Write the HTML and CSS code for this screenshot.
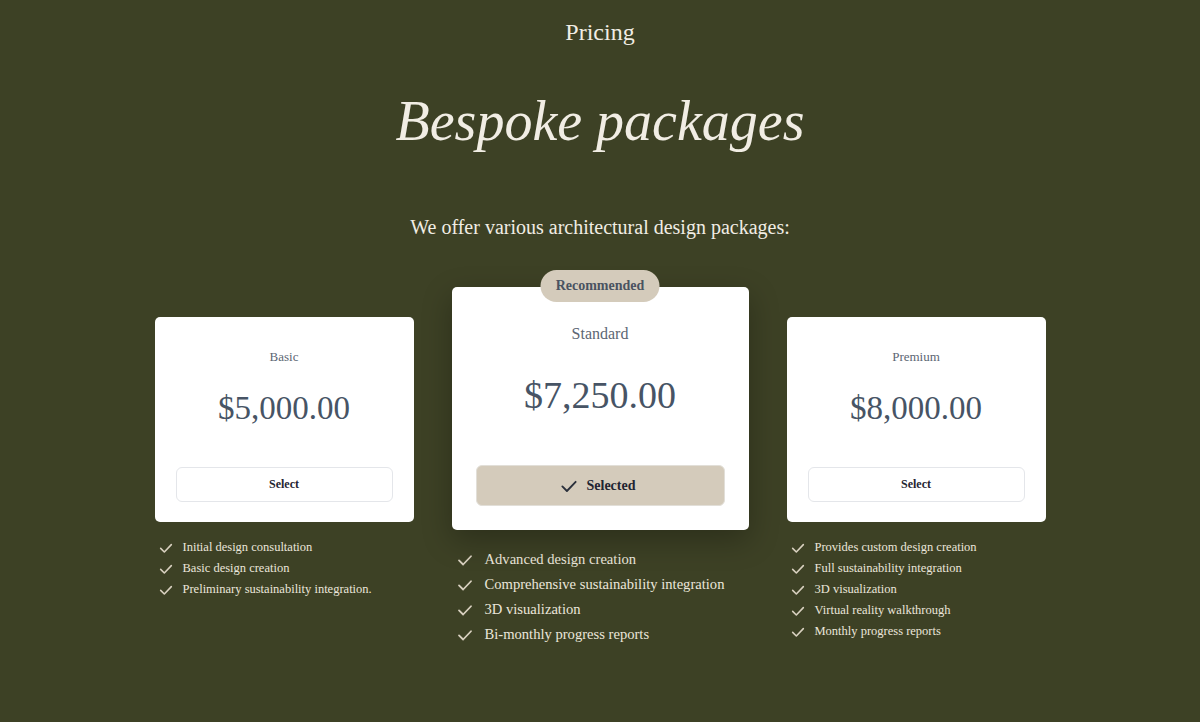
FILE: index.html
```html
<!DOCTYPE html>
<html lang="en">
<head>
  <meta charset="UTF-8">
  <meta name="viewport" content="width=device-width, initial-scale=1.0">
  <title>Pricing</title>
  <link rel="stylesheet" href="styles.css">
</head>
<body>
  <section class="pricing">
    <div class="eyebrow">Pricing</div>
    <h1>Bespoke packages</h1>
    <p class="lead">We offer various architectural design packages:</p>

    <div class="plans">
      <div class="plan">
        <div class="card">
          <div class="plan-name">Basic</div>
          <div class="plan-price">$5,000.00</div>
          <button class="select-btn">Select</button>
        </div>
        <ul class="features">
          <li><svg viewBox="0 0 24 24"><polyline points="4 12.5 9.5 18 20 7"/></svg>Initial design consultation</li>
          <li><svg viewBox="0 0 24 24"><polyline points="4 12.5 9.5 18 20 7"/></svg>Basic design creation</li>
          <li><svg viewBox="0 0 24 24"><polyline points="4 12.5 9.5 18 20 7"/></svg>Preliminary sustainability integration.</li>
        </ul>
      </div>

      <div class="plan plan-featured">
        <div class="card">
          <span class="badge">Recommended</span>
          <div class="plan-name">Standard</div>
          <div class="plan-price">$7,250.00</div>
          <button class="select-btn is-selected"><svg viewBox="0 0 24 24"><polyline points="4 12.5 9.5 18 20 7"/></svg>Selected</button>
        </div>
        <ul class="features">
          <li><svg viewBox="0 0 24 24"><polyline points="4 12.5 9.5 18 20 7"/></svg>Advanced design creation</li>
          <li><svg viewBox="0 0 24 24"><polyline points="4 12.5 9.5 18 20 7"/></svg>Comprehensive sustainability integration</li>
          <li><svg viewBox="0 0 24 24"><polyline points="4 12.5 9.5 18 20 7"/></svg>3D visualization</li>
          <li><svg viewBox="0 0 24 24"><polyline points="4 12.5 9.5 18 20 7"/></svg>Bi-monthly progress reports</li>
        </ul>
      </div>

      <div class="plan">
        <div class="card">
          <div class="plan-name">Premium</div>
          <div class="plan-price">$8,000.00</div>
          <button class="select-btn">Select</button>
        </div>
        <ul class="features">
          <li><svg viewBox="0 0 24 24"><polyline points="4 12.5 9.5 18 20 7"/></svg>Provides custom design creation</li>
          <li><svg viewBox="0 0 24 24"><polyline points="4 12.5 9.5 18 20 7"/></svg>Full sustainability integration</li>
          <li><svg viewBox="0 0 24 24"><polyline points="4 12.5 9.5 18 20 7"/></svg>3D visualization</li>
          <li><svg viewBox="0 0 24 24"><polyline points="4 12.5 9.5 18 20 7"/></svg>Virtual reality walkthrough</li>
          <li><svg viewBox="0 0 24 24"><polyline points="4 12.5 9.5 18 20 7"/></svg>Monthly progress reports</li>
        </ul>
      </div>
    </div>
  </section>
</body>
</html>
```

FILE: styles.css
```css
* {
  box-sizing: border-box;
}

body {
  margin: 0;
  background-color: #3d4125;
  font-family: "Liberation Serif", "Times New Roman", serif;
  color: #f1ede4;
}

.pricing {
  padding-top: 17px;
  text-align: center;
}

.eyebrow {
  font-size: 24px;
  line-height: 30px;
}

h1 {
  margin: 44px 0 0;
  font-size: 56px;
  font-style: italic;
  font-weight: normal;
  line-height: 60px;
}

.lead {
  margin: 63px 0 0;
  font-size: 20px;
  line-height: 26px;
}

.plans {
  display: flex;
  justify-content: center;
  align-items: flex-start;
  gap: 38px;
  margin-top: 47px;
}

.plan {
  width: 259px;
  margin-top: 30px;
  text-align: left;
}

.card {
  position: relative;
  display: flex;
  flex-direction: column;
  align-items: stretch;
  padding: 30px 21px 20px;
  background: #fff;
  border-radius: 5px;
  text-align: center;
}

.plan-name {
  font-size: 13px;
  line-height: 20px;
  color: #5c6673;
}

.plan-price {
  margin-top: 21px;
  font-size: 33px;
  line-height: 40px;
  color: #475465;
}

.select-btn {
  display: flex;
  align-items: center;
  justify-content: center;
  gap: 8px;
  height: 35px;
  margin-top: 39px;
  padding: 0;
  background: #fff;
  border: 1px solid #e4e6ea;
  border-radius: 6px;
  font-family: inherit;
  font-size: 12px;
  font-weight: bold;
  color: #1f2532;
  cursor: pointer;
}

.select-btn svg {
  width: 20px;
  height: 20px;
  fill: none;
  stroke: #2a303b;
  stroke-width: 2.2;
  stroke-linecap: round;
  stroke-linejoin: round;
}

.select-btn.is-selected {
  padding-right: 6px;
  background: #d4cbbb;
  border-color: #e2dfd8;
}

.features {
  list-style: none;
  margin: 15px 0 0;
  padding: 0 0 0 3px;
}

.features li {
  display: flex;
  align-items: center;
  gap: 9px;
  font-size: 12.5px;
  line-height: 21px;
  color: #ebe6db;
}

.features svg {
  flex: none;
  width: 16px;
  height: 16px;
  fill: none;
  stroke: #d8d0bf;
  stroke-width: 2.4;
  stroke-linecap: round;
  stroke-linejoin: round;
}

/* featured column is drawn ~1.17x larger */
.plan-featured {
  width: 297px;
  margin-top: 0;
}

.plan-featured .card {
  padding: 36px 24px 24px;
  box-shadow: 0 10px 30px rgba(0, 0, 0, 0.28);
}

.plan-featured .plan-name {
  font-size: 16px;
  line-height: 22px;
}

.plan-featured .plan-price {
  margin-top: 27px;
  font-size: 38px;
  line-height: 46px;
}

.plan-featured .select-btn {
  height: 41px;
  margin-top: 47px;
  font-size: 14px;
}

.plan-featured .features {
  margin-top: 17px;
  padding-left: 4px;
}

.plan-featured .features li {
  gap: 11px;
  font-size: 14.6px;
  line-height: 25px;
}

.plan-featured .features svg {
  width: 18px;
  height: 18px;
}

.badge {
  position: absolute;
  top: -17px;
  left: 50%;
  transform: translateX(-50%);
  width: 119px;
  height: 32px;
  line-height: 32px;
  background: #d4cbbb;
  border-radius: 16px;
  font-size: 14px;
  font-weight: bold;
  color: #4a5361;
  text-align: center;
}
```
